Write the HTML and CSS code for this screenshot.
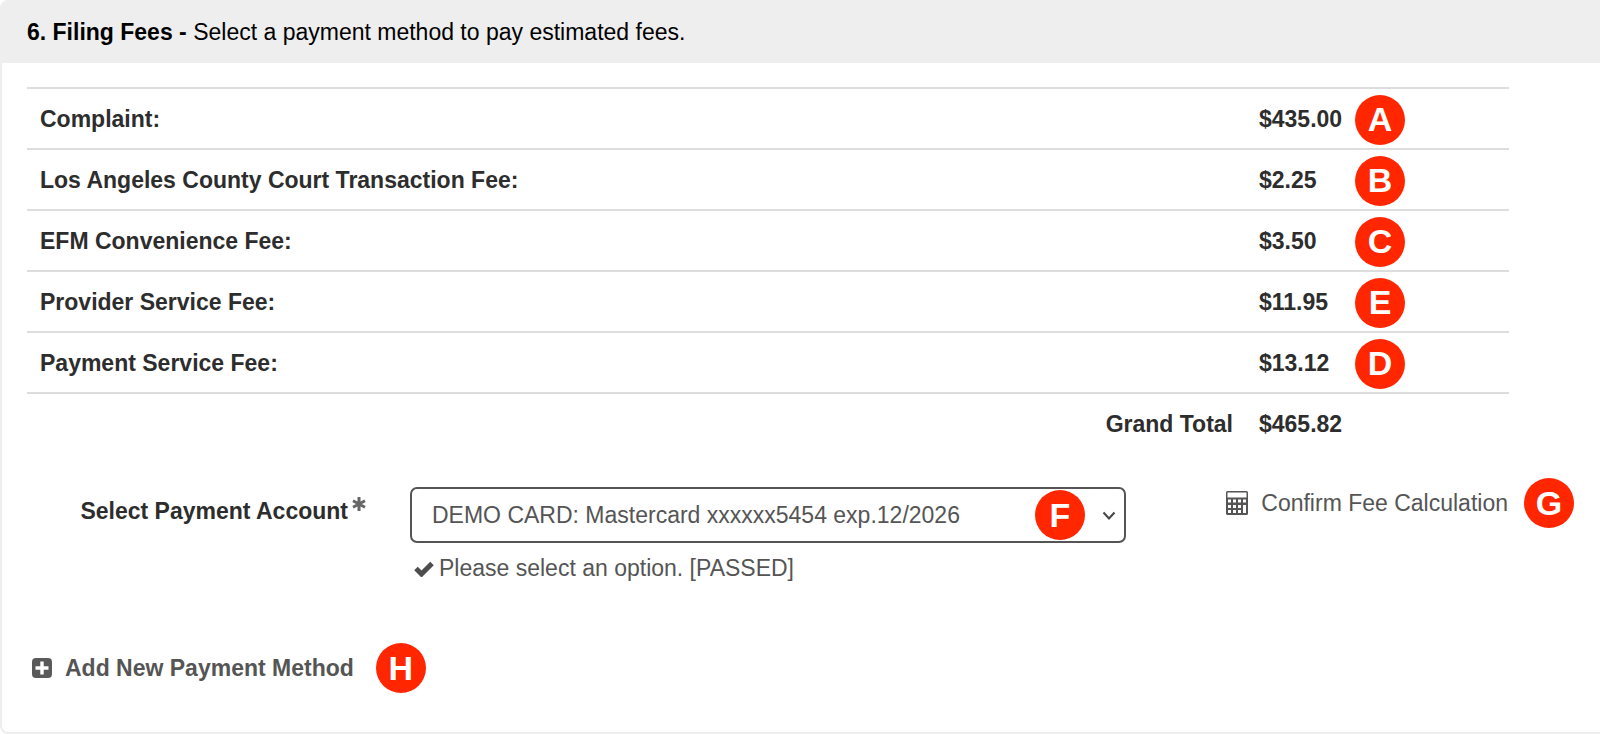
FILE: index.html
```html
<!DOCTYPE html>
<html lang="en">
<head>
<meta charset="utf-8">
<meta name="viewport" content="width=device-width, initial-scale=1">
<title>Filing Fees</title>
<link rel="stylesheet" href="styles.css">
</head>
<body>
<section class="panel">
  <h2 class="panel-header"><strong>6. Filing Fees -</strong> Select a payment method to pay estimated fees.</h2>
  <div class="panel-body">
    <table class="fees">
      <tbody>
        <tr><th scope="row">Complaint:</th><td><div class="amount"><span class="value">$435.00</span><span class="badge">A</span></div></td></tr>
        <tr><th scope="row">Los Angeles County Court Transaction Fee:</th><td><div class="amount"><span class="value">$2.25</span><span class="badge">B</span></div></td></tr>
        <tr><th scope="row">EFM Convenience Fee:</th><td><div class="amount"><span class="value">$3.50</span><span class="badge">C</span></div></td></tr>
        <tr><th scope="row">Provider Service Fee:</th><td><div class="amount"><span class="value">$11.95</span><span class="badge">E</span></div></td></tr>
        <tr><th scope="row">Payment Service Fee:</th><td><div class="amount"><span class="value">$13.12</span><span class="badge">D</span></div></td></tr>
      </tbody>
      <tfoot>
        <tr><th scope="row">Grand Total</th><td>$465.82</td></tr>
      </tfoot>
    </table>

    <div class="payment">
      <label class="payment-label" for="account">Select Payment Account
        <svg class="required" viewBox="0 0 14 14" aria-hidden="true"><path d="M7 0v14M1 3.800l12 6.400M13 3.800l-12 6.400"/></svg>
      </label>
      <div class="payment-field">
        <div class="select-wrap">
          <select class="select" id="account">
            <option>DEMO CARD: Mastercard xxxxxx5454 exp.12/2026</option>
          </select>
          <span class="badge select-badge">F</span>
          <svg class="chevron" viewBox="0 0 14 10" aria-hidden="true"><path d="M1.500 1.500 7 7.500l5.500-6"/></svg>
        </div>
        <p class="hint">
          <svg class="check" viewBox="0 0 20 16" aria-hidden="true"><path d="M2 7.500 7.500 13 18 2.500"/></svg>
          <span>Please select an option. [PASSED]</span>
        </p>
      </div>
      <div class="confirm">
        <a class="link" href="#confirm">
          <svg class="calculator" viewBox="0 0 22 24" aria-hidden="true">
            <path fill-rule="evenodd" d="M1.500 0h19A1.500 1.500 0 0 1 22 1.500v21a1.500 1.500 0 0 1-1.500 1.500h-19A1.500 1.500 0 0 1 0 22.500v-21A1.500 1.500 0 0 1 1.500 0ZM1.500 1.500v5h19v-5ZM2 8.500v3h3v-3ZM7 8.500v3h3v-3ZM12 8.500v3h3v-3ZM17 8.500v3h3v-3ZM2 14v3h3v-3ZM7 14v3h3v-3ZM12 14v3h3v-3ZM17 14v8h3v-8ZM2 19v3h3v-3ZM7 19v3h3v-3ZM12 19v3h3v-3Z"/>
          </svg>
          <span>Confirm Fee Calculation</span>
        </a>
        <span class="badge">G</span>
      </div>
    </div>

    <div class="add">
      <a class="link add-link" href="#add">
        <svg class="plus" viewBox="0 0 20 20" aria-hidden="true">
          <path fill-rule="evenodd" d="M4 0h12a4 4 0 0 1 4 4v12a4 4 0 0 1-4 4H4a4 4 0 0 1-4-4V4a4 4 0 0 1 4-4ZM8.300 3.500v4.800H3.500v3.400h4.800v4.800h3.400v-4.800h4.800V8.300h-4.800V3.500Z"/>
        </svg>
        <span>Add New Payment Method</span>
      </a>
      <span class="badge">H</span>
    </div>
  </div>
</section>
</body>
</html>
```
FILE: styles.css
```css
* {
  box-sizing: border-box;
}

body {
  margin: 0;
  background: #fff;
  color: #2d2d2d;
  font-family: "Liberation Sans", Arial, Helvetica, sans-serif;
  font-size: 23px;
  line-height: 29px;
}

.panel {
  border-left: 2px solid #eee;
  border-bottom: 2px solid #eee;
  border-radius: 8px 0 0 8px;
  overflow: hidden;
}

.panel-header {
  margin: 0;
  padding: 18px 25px 16px;
  background: #eee;
  color: #000;
  font-size: 23px;
  font-weight: 400;
}

.panel-body {
  padding: 24px 26px 39px 25px;
}

.fees {
  width: calc(100% - 65px);
  border-collapse: collapse;
  table-layout: fixed;
  font-weight: 700;
}

.fees tr {
  height: 61px;
}

.fees th,
.fees td {
  padding: 2px 13px 0;
  border-top: 2px solid #ddd;
  text-align: left;
}

.fees td {
  width: 263px;
}

.fees tfoot th {
  text-align: right;
}

.fees tfoot th,
.fees tfoot td {
  padding-top: 0;
}

.amount {
  display: flex;
  align-items: center;
}

.value {
  width: 96px;
}

.badge {
  display: flex;
  flex: none;
  align-items: center;
  justify-content: center;
  width: 50px;
  height: 50px;
  border-radius: 50%;
  background: #ff2600;
  color: #fff;
  font-size: 34px;
  font-weight: 700;
}

.payment {
  display: grid;
  grid-template-columns: 383fr 716fr 448fr;
  align-items: start;
  margin-top: 24px;
}

.payment-label {
  display: flex;
  justify-content: flex-end;
  gap: 4px;
  margin-top: 19px;
  padding-right: 44px;
  font-weight: 700;
}

.required {
  width: 14px;
  height: 14px;
  fill: none;
  stroke: #666;
  stroke-width: 3;
}

.payment-field {
  margin-top: 9px;
  color: #555;
}

.select-wrap {
  position: relative;
}

.select {
  display: block;
  width: 100%;
  height: 56px;
  padding: 0 100px 0 20px;
  border: 2px solid #555;
  border-radius: 7px;
  background: #fff;
  color: #555;
  font: inherit;
  appearance: none;
}

.select-badge {
  position: absolute;
  top: 3px;
  right: 41px;
  pointer-events: none;
}

.chevron {
  position: absolute;
  top: 24px;
  right: 10px;
  width: 14px;
  height: 10px;
  fill: none;
  stroke: #444;
  stroke-width: 2;
  pointer-events: none;
}

.hint {
  display: flex;
  align-items: center;
  gap: 5px;
  margin: 11px 0 0 4px;
}

.check {
  width: 20px;
  height: 16px;
  fill: none;
  stroke: #4d4d4d;
  stroke-width: 5;
}

.confirm {
  display: flex;
  align-items: center;
  justify-content: flex-end;
  gap: 16px;
}

.link {
  display: flex;
  align-items: center;
  gap: 13px;
  color: #555;
  text-decoration: none;
}

.calculator {
  width: 22px;
  height: 24px;
  fill: #555;
}

.add {
  display: flex;
  align-items: center;
  gap: 22px;
  margin-top: 60px;
  padding-left: 5px;
}

.add-link {
  font-weight: 700;
}

.plus {
  width: 20px;
  height: 20px;
  fill: #5a5a5a;
}
```
